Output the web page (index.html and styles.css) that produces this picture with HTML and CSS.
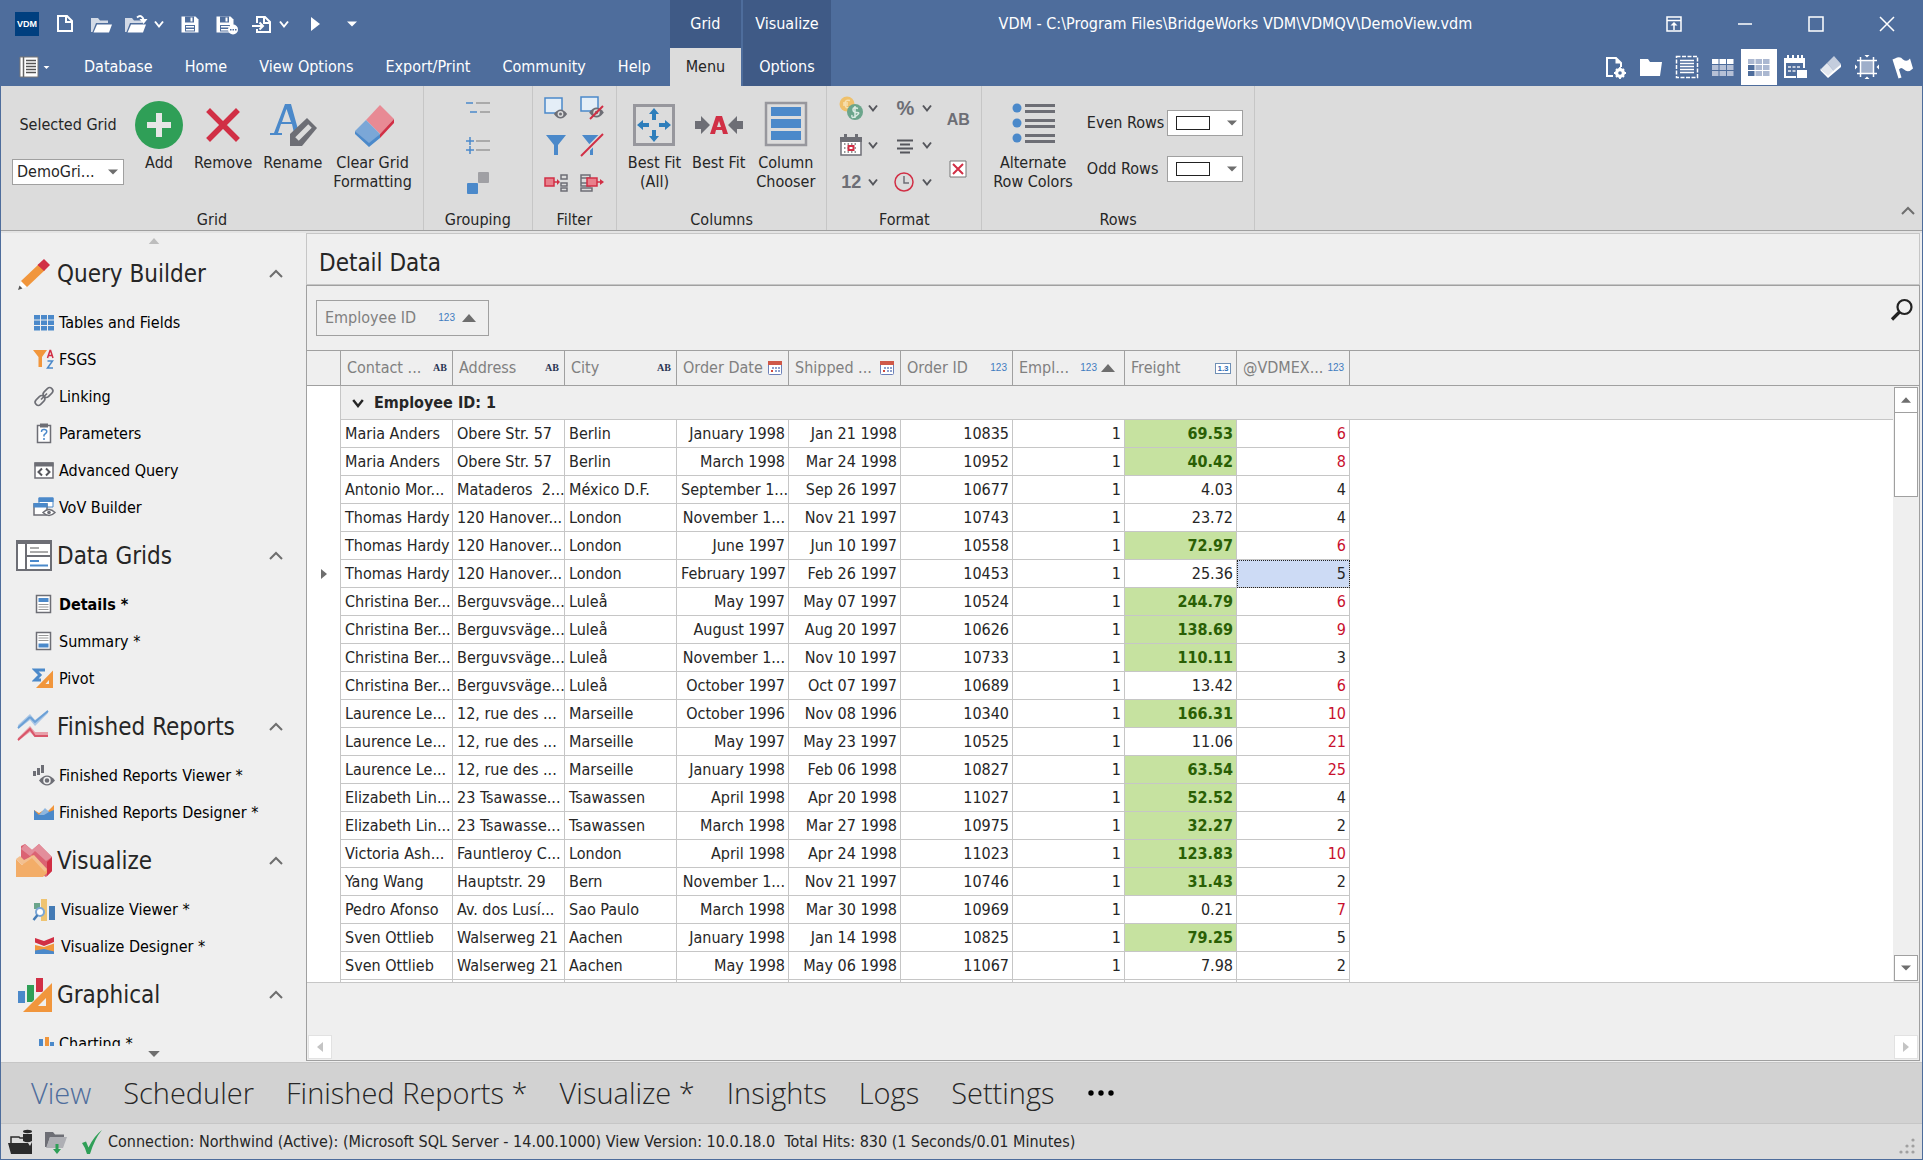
FILE: index.html
```html
<!DOCTYPE html>
<html lang="en">
<head>
<meta charset="utf-8">
<title>VDM - DemoView.vdm</title>
<link rel="stylesheet" href="styles.css">
</head>
<body>
<svg class="defs" aria-hidden="true">
  <symbol id="chev-down" viewBox="0 0 10 10"><path d="M1 2.500 5 7.500 9 2.500" fill="none" stroke="currentColor" stroke-width="2"/></symbol>
  <symbol id="chev-up" viewBox="0 0 14 14"><path d="M1 10 7 4 13 10" fill="none" stroke="currentColor" stroke-width="2"/></symbol>
  <symbol id="tri-down" viewBox="0 0 12 12"><path d="M1 3.500H11L6 8.500Z" fill="currentColor"/></symbol>
  <symbol id="tri-up" viewBox="0 0 14 8"><path d="M0 8H14L7 0Z" fill="currentColor"/></symbol>
  <symbol id="folder" viewBox="0 0 24 24"><path d="M1 6h7l2 2.500h8v2.500H6L2.500 20H1Z" fill="#d3dae6"/><path d="M7 12.500H22L19 20.500H3.500Z" fill="#fff"/></symbol>
  <symbol id="floppy" viewBox="0 0 24 24"><path d="M3.500 4.500h14l3 3v13h-17Z" fill="#fff"/><path d="M7 4.500h9v6H7Z" fill="#4e6d9c"/><path d="M12.500 5.500h2v4h-2Z" fill="#fff"/><path d="M7 13h10v6.500H7Z" fill="#4e6d9c"/><path d="M8 14h8v1.500H8ZM8 17h8v1.500H8Z" fill="#fff"/></symbol>
  <symbol id="calendar" viewBox="0 0 16 16"><rect x="1.500" y="1.500" width="13" height="13" rx="1" fill="#fff" stroke="#6c80b8"/><path d="M1 1h14v4H1Z" fill="#cf5848"/><path d="M5 7h2v2H5ZM8 7h2v2H8ZM11 7h2v2h-2ZM8 10h2v2H8ZM11 10h2v2h-2Z" fill="#8ea0cc"/><path d="M4 10h2v2H4Z" fill="#d0483c"/></symbol>
  <symbol id="eye" viewBox="0 0 16 12"><path d="M0 6Q8-5 16 6Q8 17 0 6Z" fill="#6d6e75"/><circle cx="8" cy="6" r="3.500" fill="#dcdcdc"/><circle cx="8" cy="6" r="1.800" fill="#6d6e75"/></symbol>
  <symbol id="eraser" viewBox="0 0 48 48"><path d="M31 4 45 18 31 33 17 19Z" fill="#e88a94"/><path d="M45 18v4L31 37v-4Z" fill="#d12f45"/><path d="M17 19 31 33 20 43 6 30Z" fill="#7ba7d7"/><path d="M31 33v4L20 46 6 33v-3L20 42Z" fill="#4b89ca"/></symbol>
</svg>

<header class="top">
  <div class="top-left">
    <div class="quick">
      <span class="logo">VDM</span>
      <button aria-label="New"><svg width="24" height="24"><path d="M5 4.500h9l5 5V19.500H5Z" fill="none" stroke="#fff" stroke-width="2" transform="translate(0 -.5)"/><path d="M13 4v6h6" fill="none" stroke="#fff" stroke-width="2"/></svg></button>
      <button aria-label="Open"><svg width="24" height="24"><use href="#folder"/></svg></button>
      <button class="split" aria-label="Open recent"><svg width="26" height="24"><use href="#folder" width="24" height="24"/><path d="M13 5.500q5-4 7 3.500" fill="none" stroke="#fff" stroke-width="2"/><path d="M15.500 7h8l-4 5Z" fill="#fff"/></svg><svg width="10" height="10"><use href="#chev-down"/></svg></button>
      <button aria-label="Save"><svg width="24" height="24"><use href="#floppy"/></svg></button>
      <button aria-label="Save as"><svg width="24" height="24"><use href="#floppy" x="-2"/><circle cx="18" cy="17.500" r="5" fill="#fff"/><path d="M15 17h1.500v1.500H15ZM17.500 17H19v1.500h-1.500ZM20 17h1.500v1.500H20Z" fill="#4e6d9c"/></svg></button>
      <button class="split" aria-label="Import"><svg width="26" height="24"><path d="M8 11V5h8l5 5v10H8v-3" fill="none" stroke="#fff" stroke-width="2"/><path d="M15 4v7h6M3 14h11M10.500 10.500 14 14l-3.500 3.500" fill="none" stroke="#fff" stroke-width="2"/></svg><svg width="10" height="10"><use href="#chev-down"/></svg></button>
      <button aria-label="Run"><svg width="10" height="14"><path d="M1 0v14l9-7Z" fill="#fff"/></svg></button>
      <button aria-label="Customize"><svg width="12" height="12"><use href="#tri-down"/></svg></button>
    </div>
    <nav class="tabs">
      <button class="app" aria-label="Application menu"><svg width="20" height="22"><path d="M1 1h18v20H1Z" fill="#fff" stroke="#777"/><path d="M4.500 1v20" stroke="#666" stroke-width="1.500"/><path d="M7 4.500h10M7 7.500h10M7 10.500h10M7 13.500h10M7 16.500h10" stroke="#555" stroke-width="1.500"/></svg><svg width="7" height="7"><use href="#tri-down"/></svg></button>
      <button>Database</button><button>Home</button><button>View Options</button><button>Export/Print</button><button>Community</button><button>Help</button>
    </nav>
  </div>
  <div class="ctx"><span>Grid</span><button class="active">Menu</button></div>
  <div class="ctx"><span>Visualize</span><button>Options</button></div>
  <div class="top-right">
    <div class="caption-bar">
      <h1>VDM - C:\Program Files\BridgeWorks VDM\VDMQV\DemoView.vdm</h1>
      <button aria-label="Ribbon display"><svg width="16" height="16"><path d="M1 1h14v14H1ZM1 4.500h14M8 14V8" fill="none" stroke="#fff" stroke-width="1.500"/><path d="M4.500 9.500h7L8 6Z" fill="#fff"/></svg></button>
      <button aria-label="Minimize"><svg width="16" height="16"><path d="M1 8h14" stroke="#fff" stroke-width="1.500"/></svg></button>
      <button aria-label="Maximize"><svg width="16" height="16"><path d="M1 1h14v14H1Z" fill="none" stroke="#fff" stroke-width="1.500"/></svg></button>
      <button aria-label="Close"><svg width="16" height="16"><path d="M1 1 15 15M15 1 1 15" stroke="#fff" stroke-width="1.500"/></svg></button>
    </div>
    <div class="views">
      <button aria-label="Document settings"><svg width="24" height="24"><path d="M10 21H4V3h9l5 5v4" fill="none" stroke="#fff" stroke-width="2"/><path d="M12.500 2.500v6h6" fill="#fff"/><circle cx="17" cy="18" r="3.500" fill="none" stroke="#fff" stroke-width="3"/><path d="M17 12v12M11 18h12M13 14l8 8M21 14l-8 8" stroke="#fff" stroke-width="1.800"/><circle cx="17" cy="18" r="1.800" fill="#4e6d9c"/></svg></button>
      <button aria-label="Folder"><svg width="24" height="24"><path d="M1 4h8l2 3h12l-2 14H1Z" fill="#fff"/></svg></button>
      <button aria-label="Select lines"><svg width="24" height="24"><path d="M1.500 1.500h21v21h-21Z" fill="none" stroke="#fff" stroke-width="1.500" stroke-dasharray="4 1.500"/><path d="M5 5.500h14M5 8.500h14M5 11.500h14M5 14.500h14M5 17.500h14" stroke="#fff" stroke-width="1.500"/></svg></button>
      <button aria-label="Table"><svg width="24" height="24"><path d="M1 4h6.500v5H1ZM8.500 4h6.500v5H8.500ZM16 4h6.500v5H16Z" fill="#fff"/><path d="M1 10h6.500v5H1ZM8.500 10h6.500v5H8.500ZM16 10h6.500v5H16ZM1 16h6.500v5H1ZM8.500 16h6.500v5H8.500ZM16 16h6.500v5H16Z" fill="#b5c0d6"/></svg></button>
      <button class="active" aria-label="Data grid"><svg width="24" height="24"><path d="M1 4h6.500v5H1ZM8.500 4h6.500v5H8.500ZM16 4h6.500v5H16ZM8.500 10h6.500v5H8.500ZM16 10h6.500v5H16ZM8.500 16h6.500v5H8.500ZM16 16h6.500v5H16Z" fill="#abb8d1"/><path d="M1 10h6.500v5H1ZM1 16h6.500v5H1Z" fill="#4e6d9c"/></svg></button>
      <button aria-label="Schedule"><svg width="24" height="24"><path d="M2 4v18h11M2 4h19v9" fill="none" stroke="#fff" stroke-width="2"/><path d="M1 3h21v5H1Z" fill="#fff"/><path d="M5 0v5M10 0v5M15 0v5M19 0v5" stroke="#fff" stroke-width="2"/><path d="M5 11h3v2H5ZM9.500 11h3v2h-3ZM14 11h3v2h-3ZM5 15h3v2H5ZM9.500 15h3v2h-3Z" fill="#c5cede"/><path d="M14 15h10v8H14Z" fill="#fff"/></svg></button>
      <button aria-label="Eraser"><svg width="24" height="24"><path d="M15 1 22 9 15 16 8 8Z" fill="#c4cddd"/><path d="M8 8 15 16 9 21 2 14Z" fill="#e2e7ef"/><path d="M22 9v3L9 23 1.500 15.500v-2L9 20.500Z" fill="#fff"/></svg></button>
      <button aria-label="Fit"><svg width="24" height="24"><path d="M5 5h14v14H5Z" fill="#9fafca"/><path d="M5.500 2v20M18.500 2v20M2 5.500h20M2 18.500h20" stroke="#fff" stroke-width="1.500"/><path d="M9.500 0h5L12 2.500ZM9.500 24h5L12 21.500ZM0 9.500v5L2.500 12ZM24 9.500v5L21.500 12Z" fill="#fff"/></svg></button>
      <button aria-label="Flag"><svg width="24" height="24"><path d="M1.500 4.500 4 3.500q5-3 8 1 4 3 7-1l3 10q-5 5-9 1-3-3-5 0l2.500 8-3 1Z" fill="#fff"/></svg></button>
    </div>
  </div>
</header>

<section class="ribbon">
  <div class="group">
    <div class="tools">
      <div class="picker">
        <label for="grid">Selected Grid</label>
        <div class="select"><select id="grid"><option>DemoGri...</option></select><svg width="12" height="12"><use href="#tri-down"/></svg></div>
      </div>
      <button class="big"><svg width="48" height="48"><circle cx="24" cy="24" r="24" fill="#2f9f57"/><path d="M24 12v24M12 24h24" stroke="#e6e6e6" stroke-width="6"/></svg>Add</button>
      <button class="big"><svg width="48" height="48"><path d="M11 11 37 37M37 11 11 37" stroke="#d12f45" stroke-width="5.500" stroke-linecap="square"/></svg>Remove</button>
      <button class="big"><svg width="48" height="48"><path d="M16 3h6l8 29h4v2H22v-2h3l-2-9H12l-3 9h4v2H1v-2h4ZM17.500 8 13 21h9Z" fill="#4b89ca"/><path d="M21 45V33L38 17 48 27 33 45Z" fill="#6d6e75"/><path d="M28 38 41 25" stroke="#dcdcdc" stroke-width="5"/></svg>Rename</button>
      <button class="big"><svg width="48" height="48"><use href="#eraser"/></svg>Clear Grid<br>Formatting</button>
    </div>
    <h2>Grid</h2>
  </div>
  <div class="group grouping">
    <div class="tools">
      <div class="stack">
        <button aria-label="Collapse groups"><svg width="24" height="24"><path d="M0 7h7M4 16h7" stroke="#4b89ca" stroke-width="1.500"/><path d="M10 7h14M14 16h10" stroke="#999" stroke-width="1.500"/></svg></button>
        <button aria-label="Expand groups"><svg width="24" height="24"><path d="M0 8h8M4 4v8M0 17h8M4 13v8" stroke="#4b89ca" stroke-width="1.500"/><path d="M10 8h14M10 17h14" stroke="#999" stroke-width="1.500"/></svg></button>
        <button aria-label="Group merge"><svg width="24" height="24"><rect x="1" y="13" width="11" height="11" rx="1" fill="#4b89ca"/><rect x="12" y="2" width="11" height="11" rx="1" fill="#a0a0a4"/></svg></button>
      </div>
    </div>
    <h2>Grouping</h2>
  </div>
  <div class="group filter">
    <div class="tools">
      <div class="pair">
        <button aria-label="Show"><svg width="24" height="24"><path d="M1 2h17v15H1Z" fill="#e4eef7" stroke="#4b89ca" stroke-width="1.500"/><use href="#eye" x="9" y="13" width="15" height="10"/></svg></button>
        <button aria-label="Hide"><svg width="24" height="24"><path d="M1 1h17v14H1Z" fill="#e4eef7" stroke="#4b89ca" stroke-width="1.500"/><use href="#eye" x="9" y="11" width="15" height="11"/><path d="M10 23 23 10" stroke="#d12f45" stroke-width="2"/></svg></button>
        <button aria-label="Filter"><svg width="24" height="24"><path d="M2 2h20l-8 10v10h-4V12Z" fill="#4b89ca"/></svg></button>
        <button aria-label="Clear filter"><svg width="24" height="24"><path d="M2 2h19l-8 10v10h-3V12Z" fill="#4b89ca"/><path d="M1 23 23 1" stroke="#dcdcdc" stroke-width="5"/><path d="M1 23 23 1" stroke="#d12f45" stroke-width="2"/></svg></button>
        <button aria-label="Insert before"><svg width="24" height="24"><path d="M1 8h9v8H1Z" fill="#e8808c" stroke="#d12f45" stroke-width="1.500"/><path d="M10 12h4" stroke="#d12f45" stroke-width="1.500"/><path d="M13 9v6l3-3Z" fill="#d12f45"/><path d="M17 5h6v4h-6ZM17 13h6v3h-6ZM17 18h6v3h-6Z" fill="none" stroke="#6d6e75" stroke-width="1.500"/></svg></button>
        <button aria-label="Insert after"><svg width="24" height="24"><path d="M1 5h9v3H1ZM1 13h9v3H1ZM1 18h11v3H1ZM1 8v5" fill="none" stroke="#6d6e75" stroke-width="1.500"/><path d="M7 8h10v8H7Z" fill="#e8808c" stroke="#d12f45" stroke-width="1.500"/><path d="M17 12h4" stroke="#d12f45" stroke-width="1.500"/><path d="M20 9v6l4-3Z" fill="#d12f45"/></svg></button>
      </div>
    </div>
    <h2>Filter</h2>
  </div>
  <div class="group">
    <div class="tools">
      <button class="big"><svg width="48" height="48"><path d="M4.500 4.500h39v39h-39Z" fill="none" stroke="#97979d" stroke-width="3"/><path d="M24 7 29 13H26V19H22V13H19ZM24 41 29 35H26V29H22V35H19ZM7 24 13 19V22H19V26H13V29ZM41 24 35 19V22H29V26H35V29Z" fill="#2e7ebb"/></svg>Best Fit<br>(All)</button>
      <button class="big"><svg width="48" height="48"><path d="M0 20h6v-5l9 9-9 9v-5H0ZM48 20h-6v-5l-9 9 9 9v-5h6Z" fill="#6d6e75"/><path d="M21 15h6l6 18h-5l-1-4h-6l-1 4h-5ZM24 20 22 26h4Z" fill="#d12f45"/></svg>Best Fit</button>
      <button class="big"><svg width="48" height="48"><path d="M4 2h40v42H4Z" fill="none" stroke="#97979d" stroke-width="2.500"/><path d="M9 6h30v9H9ZM9 18h30v9H9ZM9 30h30v9H9Z" fill="#4b89ca"/></svg>Column<br>Chooser</button>
    </div>
    <h2>Columns</h2>
  </div>
  <div class="group format">
    <div class="tools">
      <div class="formats">
        <button aria-label="Currency"><svg width="24" height="24"><circle cx="8" cy="8" r="7.500" fill="#efc06a"/><path d="M11 4.500Q6 3 6 8t5 3.500M4 7h5M4 9h5" fill="none" stroke="#f7e0b0" stroke-width="1.500"/><circle cx="16" cy="16" r="8" fill="#6ba58b"/><path d="M19 12.500q-5-2-5 1t4 3-1 3.500-4-1M16 10v12" fill="none" stroke="#dcebe3" stroke-width="1.500"/></svg><svg width="10" height="10"><use href="#chev-down"/></svg></button>
        <button aria-label="Percent"><b class="glyph percent">%</b><svg width="10" height="10"><use href="#chev-down"/></svg></button>
        <button aria-label="Date"><svg width="24" height="24"><path d="M2 5h20v17H2Z" fill="#fff" stroke="#6d6e75" stroke-width="1.500"/><path d="M1 4h22v5H1ZM5 1h3v4H5ZM16 1h3v4h-3Z" fill="#6d6e75"/><path d="M5 11h14M5 19h14M5 15h14" stroke="#777" stroke-width="1.500" stroke-dasharray="1.500 2"/><path d="M9.500 13h5v4h-5Z" fill="#fff" stroke="#d12f45" stroke-width="2"/></svg><svg width="10" height="10"><use href="#chev-down"/></svg></button>
        <button aria-label="Alignment"><svg width="24" height="24"><path d="M4 6.500h16M7 10.500h10M4 14.500h16M7 18.500h10" transform="translate(0 1)" stroke="#55565c" stroke-width="2"/></svg><svg width="10" height="10"><use href="#chev-down"/></svg></button>
        <button aria-label="Number"><b class="glyph">12</b><svg width="10" height="10"><use href="#chev-down"/></svg></button>
        <button aria-label="Time"><svg width="24" height="24"><circle cx="11" cy="12" r="9" fill="none" stroke="#d12f45" stroke-width="1.500"/><path d="M11 6v7h5" fill="none" stroke="#6d6e75" stroke-width="1.500"/></svg><svg width="10" height="10"><use href="#chev-down"/></svg></button>
      </div>
      <div class="extras">
        <button aria-label="Text"><b class="glyph small">AB</b></button>
        <button aria-label="Clear format"><svg width="18" height="18"><path d="M1 1h16v16H1Z" fill="#fff" stroke="#777"/><path d="M4 4 14 14M14 4 4 14" stroke="#d12f45" stroke-width="2"/></svg></button>
      </div>
    </div>
    <h2>Format</h2>
  </div>
  <div class="group">
    <div class="tools">
      <button class="big"><svg width="48" height="48"><g fill="#4b89ca"><circle cx="8" cy="7" r="4.500"/><circle cx="8" cy="22" r="4.500"/><circle cx="8" cy="37" r="4.500"/></g><path d="M16 4.500h30M16 10.500h30M16 19.500h30M16 25.500h30M16 34.500h30M16 40.500h30" stroke="#6d6e75" stroke-width="3"/></svg>Alternate<br>Row Colors</button>
      <div class="rows">
        <label for="even">Even Rows</label>
        <div class="select"><select id="even"><option>&nbsp;</option></select><i></i><svg width="12" height="12"><use href="#tri-down"/></svg></div>
        <label for="odd">Odd Rows</label>
        <div class="select"><select id="odd"><option>&nbsp;</option></select><i></i><svg width="12" height="12"><use href="#tri-down"/></svg></div>
      </div>
    </div>
    <h2>Rows</h2>
  </div>
  <button class="collapse" aria-label="Collapse ribbon"><svg width="14" height="14"><use href="#chev-up"/></svg></button>
</section>

<div class="body">
  <aside>
    <div class="more up"><svg width="12" height="6"><use href="#tri-up"/></svg></div>
    <nav class="tree">
      <button class="head"><svg width="36" height="36"><path d="M2 34 5 25 11 31Z" fill="#fff"/><path d="M2 34 3.500 29.500 6.500 32.500Z" fill="#555"/><path d="M5 25 23 8 29 14 11 31Z" fill="#f1963c"/><path d="M21.500 9 28 3 34 9 28 15Z" fill="#d12f45"/></svg><span>Query Builder</span><svg width="14" height="14"><use href="#chev-up"/></svg></button>
      <a href="#"><svg width="24" height="24"><path d="M2 4h6v4.500H2ZM9 4h6v4.500H9ZM16 4h6v4.500h-6ZM2 9.500h6v4.500H2ZM9 9.500h6v4.500H9ZM16 9.500h6v4.500h-6ZM2 15h6v4.500H2ZM9 15h6v4.500H9ZM16 15h6v4.500h-6Z" fill="#4b89ca"/></svg>Tables and Fields</a>
      <a href="#"><svg width="24" height="24"><path d="M1 2h14L10 9v10H6.500V9Z" fill="#f1963c"/><path d="M15.500 10 18 2.500h.6L21 10M16.500 7.500h3.500" fill="none" stroke="#d12f45" stroke-width="1.500"/><path d="M15.500 13h5l-5 7h5.500" fill="none" stroke="#4b89ca" stroke-width="1.500"/></svg>FSGS</a>
      <a href="#"><svg width="24" height="24" fill="none" stroke="#6d6e75" stroke-width="1.600"><rect x="-5.500" y="-3.200" width="11" height="6.400" rx="3.200" transform="translate(16 7.500) rotate(-45)"/><rect x="-5.500" y="-3.200" width="11" height="6.400" rx="3.200" transform="translate(8 15.500) rotate(-45)"/><path d="M9 14.500 15 8.500"/></svg>Linking</a>
      <a href="#"><svg width="24" height="24"><path d="M5.500 3.500h13v17h-13Z" fill="#fff" stroke="#6d6e75" stroke-width="1.500"/><path d="M8 1.500h8v4H8Z" fill="#6d6e75"/><path d="M9.500 10q0-3 3-2.500t2 3l-2.500 2.500v1.500M12 16v2" fill="none" stroke="#4b89ca" stroke-width="1.500"/></svg>Parameters</a>
      <a href="#"><svg width="24" height="24"><path d="M3 4h18v15H3Z" fill="#fff" stroke="#6d6e75" stroke-width="1.500"/><path d="M2.500 3.500h19v4h-19Z" fill="#6d6e75"/><path d="M10 9.500 6.500 13 10 16.500M14 9.500 17.500 13 14 16.500" fill="none" stroke="#55565c" stroke-width="2"/></svg>Advanced Query</a>
      <a href="#"><svg width="24" height="24"><path d="M7 2h14v9H7Z" fill="#fff" stroke="#4b89ca"/><path d="M6.500 1.500h15V6h-15Z" fill="#4b89ca"/><path d="M2 8h13v11H2Z" fill="#fff" stroke="#6d6e75" stroke-width="1.500"/><path d="M1.500 7h14v4.500h-14Z" fill="#4b89ca"/><path d="M11 16.500q6-6 12 0-6 6-12 0Z" fill="#fff" stroke="#6d6e75" stroke-width="1.500"/><circle cx="17" cy="16.500" r="1.800" fill="#6d6e75"/></svg>VoV Builder</a>

      <button class="head"><svg width="36" height="36"><path d="M1 3h34v29H1Z" fill="#fff" stroke="#6d6e75" stroke-width="2"/><path d="M0 2h36v4H0ZM9 4h2v28H9ZM11 17h24v2H11Z" fill="#6d6e75"/><path d="M14 10h9M14 14h18" stroke="#aaa" stroke-width="2"/><path d="M14 23h9M14 27.500h18" stroke="#4b89ca" stroke-width="2"/></svg><span>Data Grids</span><svg width="14" height="14"><use href="#chev-up"/></svg></button>
      <a href="#" class="current"><svg width="24" height="24"><path d="M4.500 2.500h14v17h-14Z" fill="#fff" stroke="#6d6e75" stroke-width="1.500"/><path d="M6.500 5h10v4h-10Z" fill="#4b89ca"/><path d="M6.500 11.500h10M6.500 14h10M6.500 16.500h10" stroke="#999" stroke-width="1.200"/></svg>Details *</a>
      <a href="#"><svg width="24" height="24"><path d="M4.500 2.500h14v17h-14Z" fill="#fff" stroke="#6d6e75" stroke-width="1.500"/><path d="M6.500 13.500h10v4h-10Z" fill="#4b89ca"/><path d="M6.500 5.500h10M6.500 8h10M6.500 10.500h10" stroke="#999" stroke-width="1.200"/></svg>Summary *</a>
      <a href="#"><svg width="24" height="24"><path d="M13 3H3l5 5-5 5h6" fill="none" stroke="#4b89ca" stroke-width="3"/><path d="M4 21 21 3.500V21ZM13.500 17H17v-4Z" fill="#f1963c" fill-rule="evenodd"/></svg>Pivot</a>

      <button class="head"><svg width="36" height="36"><path d="M2 16 14 5 19 11 32 1v3L19 17 14 11 2 20Z" fill="#a9c6e6"/><path d="M2 19 14 8M14 8l5 5L32 2" fill="none" stroke="#6ba0d6" stroke-width="2"/><path d="M2 29 14 17 19 23H32v4H18l-4-4L2 32Z" fill="#e8a0aa"/><path d="M2 31 14 20l5 7h13" fill="none" stroke="#d9566a" stroke-width="2"/></svg><span>Finished Reports</span><svg width="14" height="14"><use href="#chev-up"/></svg></button>
      <a href="#"><svg width="24" height="24"><path d="M1 7h3v5H1ZM5 4h3v7H5ZM9 1h3v8H9Z" fill="#6d6e75"/><path d="M7 16.500q8-10 16 0-8 10-16 0Z" fill="#6d6e75"/><circle cx="15" cy="16.500" r="3" fill="none" stroke="#efefef" stroke-width="1.500"/></svg>Finished Reports Viewer *</a>
      <a href="#"><svg width="24" height="24"><path d="M2 9 7 12 12 9 16 10 22 4v10H2Z" fill="#f1963c"/><path d="M2 9 7 14 13 8l4 3 5-2v10H2Z" fill="#4b89ca"/><path d="M7 14 13 7l4 4-5 3Z" fill="#8fb6de"/></svg>Finished Reports Designer *</a>

      <button class="head"><svg width="36" height="36"><path d="M5 3 9 1 16 7 23 1 36 14V28L30 34 5 20Z" fill="#db6373"/><path d="M9 1 16 7 23 1 36 14 30 18 19 8 14 13 5 6Z" fill="#e38e9b"/><path d="M36 14V28L31 33V19Z" fill="#d12f45"/><path d="M0 16 6 22 16 12 31 27V30L27 34H0Z" fill="#f3ad68"/><path d="M0 16 4 13 8 17 18 12 31 26 29 29 16 15 6 22Z" fill="#f3c090"/></svg><span>Visualize</span><svg width="14" height="14"><use href="#chev-up"/></svg></button>
      <a href="#" class="wide"><svg width="24" height="24"><path d="M2 5h6v6H2Z" fill="#6ba58b"/><path d="M9 1h6v22H9Z" fill="#efc472"/><path d="M17 8h6v14h-6Z" fill="#447bb5"/><circle cx="8" cy="14" r="4" fill="#fff" stroke="#7ba7d7" stroke-width="2"/><path d="M5.500 17 1.500 22" stroke="#447bb5" stroke-width="2.500"/></svg>Visualize Viewer *</a>
      <a href="#" class="wide"><svg width="24" height="24"><path d="M3 3 12 6 22 2v5L12 11 3 7.500Z" fill="#d12f45"/><path d="M3 10 12 12 22 8.500V17H3Z" fill="#f1963c"/><path d="M3 15.500 12 14l10 2.500V19H3Z" fill="#4b89ca"/></svg>Visualize Designer *</a>

      <button class="head"><svg width="36" height="36"><path d="M2 14h7v12H2Z" fill="#4b89ca"/><path d="M11 8h7v17h-7Z" fill="#2f9f57"/><path d="M20 1h7v14h-7Z" fill="#d12f45"/><path d="M5 36 36 5V36ZM21 29h9v-9Z" fill="#efefef"/><path d="M7 35 36 6V35ZM22 29h8v-8Z" fill="#f1963c" fill-rule="evenodd"/></svg><span>Graphical</span><svg width="14" height="14"><use href="#chev-up"/></svg></button>
      <a href="#"><svg width="24" height="24"><path d="M2 14h4v8H2ZM13 5h4v17h-4Z" fill="#f1963c"/><path d="M7 7h4v15H7ZM18 10h4v12h-4Z" fill="#4b89ca"/></svg>Charting *</a>
    </nav>
    <div class="more"><svg width="14" height="14"><use href="#tri-down"/></svg></div>
  </aside>

  <main>
    <h2>Detail Data</h2>
    <div class="panel">
      <div class="groupby">
        <button>Employee ID <span class="num">123</span><svg width="14" height="8"><use href="#tri-up"/></svg></button>
        <button class="find" aria-label="Find"><svg width="24" height="24"><circle cx="14.500" cy="9" r="7" fill="none" stroke="#222" stroke-width="2.200"/><path d="M9.500 14 2 21.500" stroke="#222" stroke-width="3.200"/></svg></button>
      </div>
      <div class="data">
        <div class="view">
        <table>
          <colgroup><col class="c-mark"><col><col><col><col><col><col><col><col><col class="c-last"><col class="c-rest"></colgroup>
          <thead><tr>
            <th></th>
            <th><div>Contact ...<span class="abc">AB</span></div></th>
            <th><div>Address<span class="abc">AB</span></div></th>
            <th><div>City<span class="abc">AB</span></div></th>
            <th><div>Order Date<svg width="16" height="16"><use href="#calendar"/></svg></div></th>
            <th><div>Shipped ...<svg width="16" height="16"><use href="#calendar"/></svg></div></th>
            <th><div>Order ID<span class="num">123</span></div></th>
            <th><div class="sorted">Empl...<span class="num">123</span><svg width="14" height="8"><use href="#tri-up"/></svg></div></th>
            <th><div>Freight<span class="dec">1.3</span></div></th>
            <th><div>@VDMEX...<span class="num">123</span></div></th>
            <th></th>
          </tr></thead>
          <tbody>
            <tr class="band"><td></td><td colspan="10"><button><svg width="12" height="12"><use href="#chev-down"/></svg>Employee ID: 1</button></td></tr>
            <tr><td></td><td>Maria Anders</td><td>Obere Str. 57</td><td>Berlin</td><td>January 1998</td><td>Jan 21 1998</td><td>10835</td><td>1</td><td class="hi">69.53</td><td class="red">6</td><td></td></tr>
            <tr><td></td><td>Maria Anders</td><td>Obere Str. 57</td><td>Berlin</td><td>March 1998</td><td>Mar 24 1998</td><td>10952</td><td>1</td><td class="hi">40.42</td><td class="red">8</td><td></td></tr>
            <tr><td></td><td>Antonio Mor...</td><td>Mataderos  2...</td><td>México D.F.</td><td>September 1...</td><td>Sep 26 1997</td><td>10677</td><td>1</td><td>4.03</td><td>4</td><td></td></tr>
            <tr><td></td><td>Thomas Hardy</td><td>120 Hanover...</td><td>London</td><td>November 1...</td><td>Nov 21 1997</td><td>10743</td><td>1</td><td>23.72</td><td>4</td><td></td></tr>
            <tr><td></td><td>Thomas Hardy</td><td>120 Hanover...</td><td>London</td><td>June 1997</td><td>Jun 10 1997</td><td>10558</td><td>1</td><td class="hi">72.97</td><td class="red">6</td><td></td></tr>
            <tr><td><svg width="6" height="10"><path d="M0 0v10l6-5Z" fill="#6e6e6e"/></svg></td><td>Thomas Hardy</td><td>120 Hanover...</td><td>London</td><td>February 1997</td><td>Feb 26 1997</td><td>10453</td><td>1</td><td>25.36</td><td class="focus">5</td><td></td></tr>
            <tr><td></td><td>Christina Ber...</td><td>Berguvsväge...</td><td>Luleå</td><td>May 1997</td><td>May 07 1997</td><td>10524</td><td>1</td><td class="hi">244.79</td><td class="red">6</td><td></td></tr>
            <tr><td></td><td>Christina Ber...</td><td>Berguvsväge...</td><td>Luleå</td><td>August 1997</td><td>Aug 20 1997</td><td>10626</td><td>1</td><td class="hi">138.69</td><td class="red">9</td><td></td></tr>
            <tr><td></td><td>Christina Ber...</td><td>Berguvsväge...</td><td>Luleå</td><td>November 1...</td><td>Nov 10 1997</td><td>10733</td><td>1</td><td class="hi">110.11</td><td>3</td><td></td></tr>
            <tr><td></td><td>Christina Ber...</td><td>Berguvsväge...</td><td>Luleå</td><td>October 1997</td><td>Oct 07 1997</td><td>10689</td><td>1</td><td>13.42</td><td class="red">6</td><td></td></tr>
            <tr><td></td><td>Laurence Le...</td><td>12, rue des ...</td><td>Marseille</td><td>October 1996</td><td>Nov 08 1996</td><td>10340</td><td>1</td><td class="hi">166.31</td><td class="red">10</td><td></td></tr>
            <tr><td></td><td>Laurence Le...</td><td>12, rue des ...</td><td>Marseille</td><td>May 1997</td><td>May 23 1997</td><td>10525</td><td>1</td><td>11.06</td><td class="red">21</td><td></td></tr>
            <tr><td></td><td>Laurence Le...</td><td>12, rue des ...</td><td>Marseille</td><td>January 1998</td><td>Feb 06 1998</td><td>10827</td><td>1</td><td class="hi">63.54</td><td class="red">25</td><td></td></tr>
            <tr><td></td><td>Elizabeth Lin...</td><td>23 Tsawasse...</td><td>Tsawassen</td><td>April 1998</td><td>Apr 20 1998</td><td>11027</td><td>1</td><td class="hi">52.52</td><td>4</td><td></td></tr>
            <tr><td></td><td>Elizabeth Lin...</td><td>23 Tsawasse...</td><td>Tsawassen</td><td>March 1998</td><td>Mar 27 1998</td><td>10975</td><td>1</td><td class="hi">32.27</td><td>2</td><td></td></tr>
            <tr><td></td><td>Victoria Ash...</td><td>Fauntleroy C...</td><td>London</td><td>April 1998</td><td>Apr 24 1998</td><td>11023</td><td>1</td><td class="hi">123.83</td><td class="red">10</td><td></td></tr>
            <tr><td></td><td>Yang Wang</td><td>Hauptstr. 29</td><td>Bern</td><td>November 1...</td><td>Nov 21 1997</td><td>10746</td><td>1</td><td class="hi">31.43</td><td>2</td><td></td></tr>
            <tr><td></td><td>Pedro Afonso</td><td>Av. dos Lusí...</td><td>Sao Paulo</td><td>March 1998</td><td>Mar 30 1998</td><td>10969</td><td>1</td><td>0.21</td><td class="red">7</td><td></td></tr>
            <tr><td></td><td>Sven Ottlieb</td><td>Walserweg 21</td><td>Aachen</td><td>January 1998</td><td>Jan 14 1998</td><td>10825</td><td>1</td><td class="hi">79.25</td><td>5</td><td></td></tr>
            <tr><td></td><td>Sven Ottlieb</td><td>Walserweg 21</td><td>Aachen</td><td>May 1998</td><td>May 06 1998</td><td>11067</td><td>1</td><td>7.98</td><td>2</td><td></td></tr>
            <tr><td></td><td></td><td></td><td></td><td></td><td></td><td></td><td></td><td></td><td></td><td></td></tr>
          </tbody>
        </table>
        </div>
        <div class="vscroll">
          <div class="corner"></div>
          <button aria-label="Scroll up"><svg width="10" height="6"><use href="#tri-up"/></svg></button>
          <div class="thumb"></div>
          <button class="end" aria-label="Scroll down"><svg width="12" height="12"><use href="#tri-down"/></svg></button>
        </div>
      </div>
      <div class="hscroll">
        <button aria-label="Scroll left"><svg width="6" height="10"><path d="M6 0v10L0 5Z" fill="#c4c4c4"/></svg></button>
        <button aria-label="Scroll right"><svg width="6" height="10"><path d="M0 0v10l6-5Z" fill="#c4c4c4"/></svg></button>
      </div>
    </div>
  </main>
</div>

<nav class="pages">
  <a href="#" class="current">View</a><a href="#">Scheduler</a><a href="#">Finished Reports *</a><a href="#">Visualize *</a><a href="#">Insights</a><a href="#">Logs</a><a href="#">Settings</a>
  <button aria-label="More pages"><svg width="28" height="8"><circle cx="4" cy="4" r="2.700"/><circle cx="14" cy="4" r="2.700"/><circle cx="24" cy="4" r="2.700"/></svg></button>
</nav>
<footer>
  <svg width="26" height="26"><path d="M3 14V8h8l1 1h5" fill="none" stroke="#2b2b2b" stroke-width="1.500"/><path d="M0 14h20l2 3 2-4v12H3Z" fill="#2b2b2b"/><path d="M15 5h9v7q-4.500 2.500-9 0Z" fill="#2b2b2b"/><ellipse cx="19.500" cy="2.500" rx="4.500" ry="1.700" fill="#2b2b2b"/></svg>
  <svg width="26" height="26"><path d="M1 3h8l2 2.500h9V8H6L3 18H1Z" fill="#6d6e75"/><path d="M6 8h17l-4 11H2Z" fill="#aeafb4"/><path d="M13 15v7" stroke="#2f9f57" stroke-width="3"/><path d="M9 20h8l-4 5Z" fill="#2f9f57"/></svg>
  <svg width="26" height="26"><path d="M2 14l4-1.500 2.500 6Q14 7 22 1q-7 8-12 24H7Q5 18 2 14Z" fill="#2f9f57"/></svg>
  <span>Connection: Northwind (Active): (Microsoft SQL Server - 14.00.1000) View Version: 10.0.18.0&nbsp; Total Hits: 830 (1 Seconds/0.01 Minutes)</span>
  <svg class="grip" width="16" height="16" fill="#a0a0a0"><circle cx="2" cy="14" r="1.600"/><circle cx="8" cy="14" r="1.600"/><circle cx="14" cy="14" r="1.600"/><circle cx="8" cy="8" r="1.600"/><circle cx="14" cy="8" r="1.600"/><circle cx="14" cy="2" r="1.600"/></svg>
</footer>
</body>
</html>
```
FILE: styles.css
```css
* { box-sizing: border-box; }
:root {
  --blue: #4e6d9c;
  --deep: #3f5a86;
  --line: #a0a0a0;
  --soft: #c6c6c6;
  --ribbon: #dcdcdc;
  --panel: #efefef;
}
body {
  margin: 0;
  height: 100vh;
  display: flex;
  flex-direction: column;
  border: 1px solid var(--blue);
  border-top: 0;
  font: 16px/20px "DejaVu Sans Condensed", "Noto Sans", sans-serif;
  color: #262626;
  background: var(--panel);
  overflow: hidden;
}
.defs { position: absolute; width: 0; height: 0; }
svg { display: block; flex: none; }
button {
  font: inherit;
  color: inherit;
  background: none;
  border: 0;
  padding: 0;
  display: flex;
  align-items: center;
  justify-content: center;
}
a { color: inherit; text-decoration: none; }
h1, h2 { margin: 0; font-size: 16px; font-weight: 400; }

/* title bar and tabs */
.top { display: flex; background: var(--blue); color: #fff; height: 86px; flex: none; white-space: nowrap; }
.top-left, .ctx, .top-right { display: flex; flex-direction: column; }
.quick { display: flex; align-items: center; height: 48px; padding-left: 8px; }
.quick button { width: 37px; height: 36px; }
.quick .split { width: 51px; gap: 4px; justify-content: flex-start; padding-left: 4px; }
.logo {
  width: 24px;
  height: 24px;
  margin: 0 7px 0 6px;
  background: #003f7f;
  font: bold 9px/24px "Liberation Sans", sans-serif;
  text-align: center;
}
.tabs { display: flex; height: 38px; padding-right: 3px; }
.tabs button { padding: 0 16px; }
.tabs .app { width: 67px; padding: 0 0 0 18px; gap: 4px; justify-content: flex-start; }
.ctx { background: var(--deep); margin-right: 2px; }
.ctx span { height: 48px; line-height: 48px; padding: 0 12px; text-align: center; }
.ctx button { height: 38px; padding: 0 16px; }
.ctx .active { background: var(--ribbon); color: #262626; }
.top-right { flex: 1; }
.caption-bar { display: flex; align-items: center; height: 48px; }
.caption-bar h1 { flex: 1; text-align: center; }
.caption-bar button { width: 71px; height: 48px; }
.views { display: flex; justify-content: flex-end; height: 38px; padding: 1px; }
.views button { width: 36px; }
.views .active { background: #fff; }

/* ribbon */
.ribbon { display: flex; flex: none; background: var(--ribbon); border-bottom: 1px solid var(--line); height: 145px; }
.group { display: flex; flex-direction: column; border-right: 1px solid var(--soft); }
.group h2 { text-align: center; }
.tools { display: flex; gap: 11px; height: 124px; padding: 4px 11px 0; align-items: flex-start; }
.big { flex-direction: column; justify-content: flex-start; padding-top: 11px; line-height: 19px; }
.big svg { margin-bottom: 4px; }
.picker { padding-top: 11px; width: 112px; }
.picker label { display: block; line-height: 48px; text-align: center; margin-bottom: 10px; }
.select { position: relative; height: 26px; }
.select select {
  appearance: none;
  width: 100%;
  height: 100%;
  border: 1px solid var(--line);
  border-radius: 0;
  background: #fff;
  padding: 0 4px;
  font: inherit;
  color: inherit;
}
.select svg { position: absolute; right: 5px; top: 7px; color: #6e6e6e; pointer-events: none; }
.select i { position: absolute; left: 9px; top: 6px; width: 34px; height: 14px; border: 1px solid #222; pointer-events: none; }
.stack, .extras { display: flex; flex-direction: column; }
.stack button, .pair button, .formats button { height: 37px; }
.grouping { min-width: 109px; }
.grouping .tools, .filter .tools { justify-content: center; padding: 3px 5px 0; }
.filter { min-width: 84px; }
.pair { display: grid; grid-template-columns: 36px 36px; }
.formats { display: grid; grid-template-columns: 54px 54px; color: #55565c; }
.formats button { justify-content: flex-start; gap: 5px; }
.format .tools { gap: 0; padding: 3px 12px 0; }
.extras { width: 22px; padding-top: 6px; }
.extras button { height: 49px; }
.glyph { width: 24px; font: bold 18px/20px "Liberation Sans", sans-serif; color: #6d6e75; text-align: center; }
.percent { font-size: 20px; }
.small { font-size: 16px; }
.rows { display: grid; grid-template-columns: 80px 76px; grid-auto-rows: 46px; align-items: center; padding: 10px 0 0 3px; }
.collapse { margin: auto 7px 12px auto; color: #6e6e6e; }

/* body */
.body { display: flex; flex: 1; min-height: 0; border-top: 2px solid #e4e4e4; }
aside { width: 305px; flex: none; display: flex; flex-direction: column; }
.more { display: flex; justify-content: center; align-items: center; height: 16px; color: #6e6e6e; }
.up { height: 11px; align-items: flex-end; color: #bdbdbd; }
.tree { flex: 1; min-height: 0; overflow: hidden; color: #000; }
.head { width: 100%; height: 60px; justify-content: flex-start; padding: 0 23px 0 15px; font-size: 24px; color: #262626; gap: 5px; }
.head span { flex: 1; text-align: left; }
.head svg:last-child { color: #6e6e6e; }
.tree a { display: flex; align-items: center; height: 37px; padding-left: 31px; gap: 3px; white-space: nowrap; }
.tree .wide { gap: 5px; }
.tree .current { font-weight: 700; }
main { flex: 1; min-width: 0; display: flex; flex-direction: column; padding: 0 2px 1px 0; }
main > h2 { border: 1px solid var(--soft); height: 52px; line-height: 58px; padding-left: 12px; font-size: 24px; flex: none; overflow: hidden; }
.panel { flex: 1; min-height: 0; display: flex; flex-direction: column; border: 1px solid var(--line); }
.groupby { display: flex; justify-content: space-between; padding: 12px 5px 0 9px; height: 64px; flex: none; align-items: flex-start; color: #808080; }
.groupby button:first-child { width: 173px; height: 36px; margin-top: 2px; border: 1px solid var(--line); padding: 0 12px 0 8px; gap: 7px; }
.groupby svg, th svg { color: #6e6e6e; }
.num { margin-left: auto; font: 10px/16px "Liberation Sans", sans-serif; color: #3f7cbf; }
.abc { margin-left: auto; font: bold 10px/16px "Liberation Serif", serif; color: #2a3553; }
.dec { margin-left: auto; border: 1px solid #6f8fb5; font: bold 8px/9px "Liberation Sans", sans-serif; color: #2f6db5; background: #fff; width: 16px; text-align: center; }
.data { display: flex; flex: 1; min-height: 0; border-bottom: 1px solid var(--soft); }
.view { flex: 1; overflow: hidden; background: #fff; }
table { table-layout: fixed; width: 100%; border-collapse: separate; border-spacing: 0; }
col { width: 112px; }
.c-mark { width: 34px; }
.c-last { width: 113px; }
.c-rest { width: auto; }
th { height: 36px; padding: 0 5px 0 6px; font-weight: 400; color: #808080; background: var(--panel); border: solid var(--line); border-width: 1px 1px 1px 0; text-align: left; white-space: nowrap; }
th:last-child { border-right: 0; }
th div { display: flex; align-items: center; justify-content: space-between; gap: 4px; }
th .sorted { padding-right: 4px; }
td { height: 28px; padding: 0 3px 0 4px; border: solid var(--soft); border-width: 0 1px 1px 0; white-space: pre; overflow: hidden; line-height: 20px; }
td:nth-child(n+5) { text-align: right; }
td:first-child { border-bottom: 0; }
td:first-child svg { margin-left: 10px; }
td:last-child { border-width: 0; }
.band td { height: 34px; }
.band td:last-child { background: var(--panel); border-bottom: 1px solid var(--soft); }
.band button { font-weight: 700; gap: 10px; padding-left: 7px; }
.hi { background: #c6e2a0; color: #2a5f05; font-weight: 700; }
.red { color: #c8102e; }
.focus { background: #cddbf5; outline: 1px dotted #222; outline-offset: -1px; }
.vscroll { width: 26px; flex: none; display: flex; flex-direction: column; align-items: center; }
.corner { width: 100%; height: 36px; border: solid var(--line); border-width: 1px 0; margin-bottom: 1px; flex: none; }
.vscroll button, .thumb { width: 24px; height: 26px; background: #fff; border: 1px solid var(--line); color: #6e6e6e; flex: none; }
.thumb { height: 85px; margin-top: -1px; }
.vscroll .end { margin: auto 0 1px; }
.hscroll { display: flex; justify-content: space-between; align-items: flex-end; height: 77px; flex: none; padding: 1px; }
.hscroll button { width: 24px; height: 24px; background: #fff; border: 1px solid #e2e2e2; }

/* page strip and status bar */
.pages { display: flex; align-items: center; gap: 32px; height: 61px; flex: none; padding: 0 30px; background: #d2d2d2; border-top: 1px solid var(--soft); font: 300 29px/40px "Open Sans", "Noto Sans", sans-serif; white-space: nowrap; }
.pages .current { color: var(--blue); }
footer { display: flex; align-items: center; gap: 10px; height: 36px; flex: none; padding: 0 7px; background: var(--ribbon); border-top: 1px solid var(--soft); white-space: nowrap; }
footer span { flex: 1; margin-left: -8px; }
.grip { margin-top: 8px; }
```
